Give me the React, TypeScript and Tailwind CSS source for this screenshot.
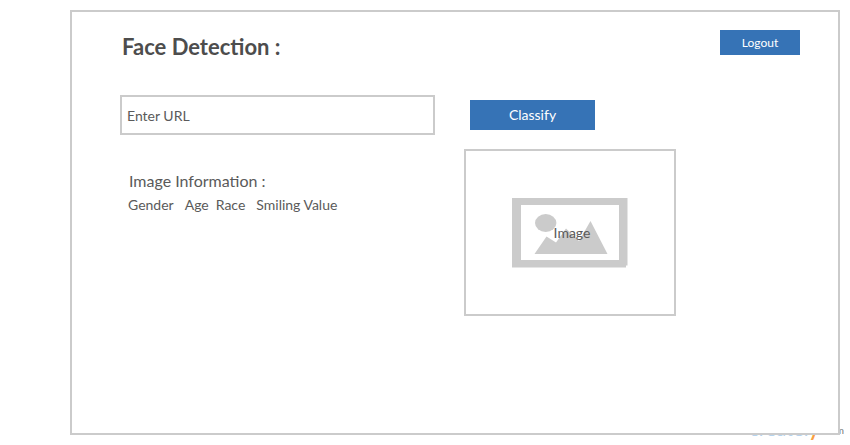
function ImagePlaceholder() {
  return (
    <svg
      viewBox="0 0 116 70"
      className="col-start-1 row-start-1 h-[70px] w-[116px]"
      aria-hidden="true"
    >
      <path
        fill="#cbcbcb"
        fillRule="evenodd"
        d="M0 0H115.500V67.500H114V69.500H0ZM9 7V62H107V7Z"
      />
      <ellipse cx="33.700" cy="25" rx="10.700" ry="9" fill="#cbcbcb" />
      <path fill="#cbcbcb" d="M22.500 56L34.500 38.500L44 44.500L54 30.500L67 43L78.500 23L95.500 56Z" />
    </svg>
  );
}

export default function App() {
  return (
    <div className="overflow-hidden bg-white pt-2.5 pr-2.5 pl-[70px] font-['Lato',sans-serif] text-[#5a5a5a]">
      <main className="relative z-10 min-h-[425px] border-2 border-[#cbcbcb] bg-white pr-[38px] pl-12">
        <header className="flex items-start justify-between pt-[18px]">
          <h1 className="pl-0.5 text-[22px] leading-[34px] font-bold text-[#4d4d4d]">
            Face Detection :
          </h1>
          <button
            type="button"
            className="h-[25px] w-20 bg-[#3673b6] text-xs text-white"
          >
            Logout
          </button>
        </header>

        <div className="flex items-start gap-[29px] pt-[31px]">
          <section className="w-[315px]">
            <input
              type="text"
              aria-label="Enter URL"
              placeholder="Enter URL"
              className="block h-10 w-full border-2 border-[#cbcbcb] px-[5px] text-sm placeholder:text-[#5a5a5a]"
            />
            <h2 className="pt-[34px] pl-[9px] text-base leading-6">
              Image Information :
            </h2>
            <p className="flex pl-2 text-sm leading-6">
              <span className="pr-[11px]">Gender</span>
              <span className="pr-[7px]">Age</span>
              <span className="pr-[11px]">Race</span>
              <span>Smiling Value</span>
            </p>
          </section>

          <section className="pt-[5px]">
            <button
              type="button"
              className="ml-1.5 block h-[30px] w-[125px] bg-[#3673b6] text-sm text-white"
            >
              Classify
            </button>
            <figure className="mt-[19px] grid h-[167px] w-[212px] place-content-center place-items-center border-2 border-[#cbcbcb]">
              <ImagePlaceholder />
              <figcaption className="z-10 col-start-1 row-start-1 pl-1 text-sm">
                Image
              </figcaption>
            </figure>
          </section>
        </div>
      </main>

      <footer className="-mt-[21px] -mr-1 flex h-[31px] items-start justify-end leading-7">
        <span className="text-xl text-[#b5d3ee]">
          createl<span className="font-bold text-[#f9a03f]">y</span>
        </span>
        <span className="pt-0.5 pl-1 text-[10px] text-[#777777]">.com</span>
      </footer>
    </div>
  );
}
